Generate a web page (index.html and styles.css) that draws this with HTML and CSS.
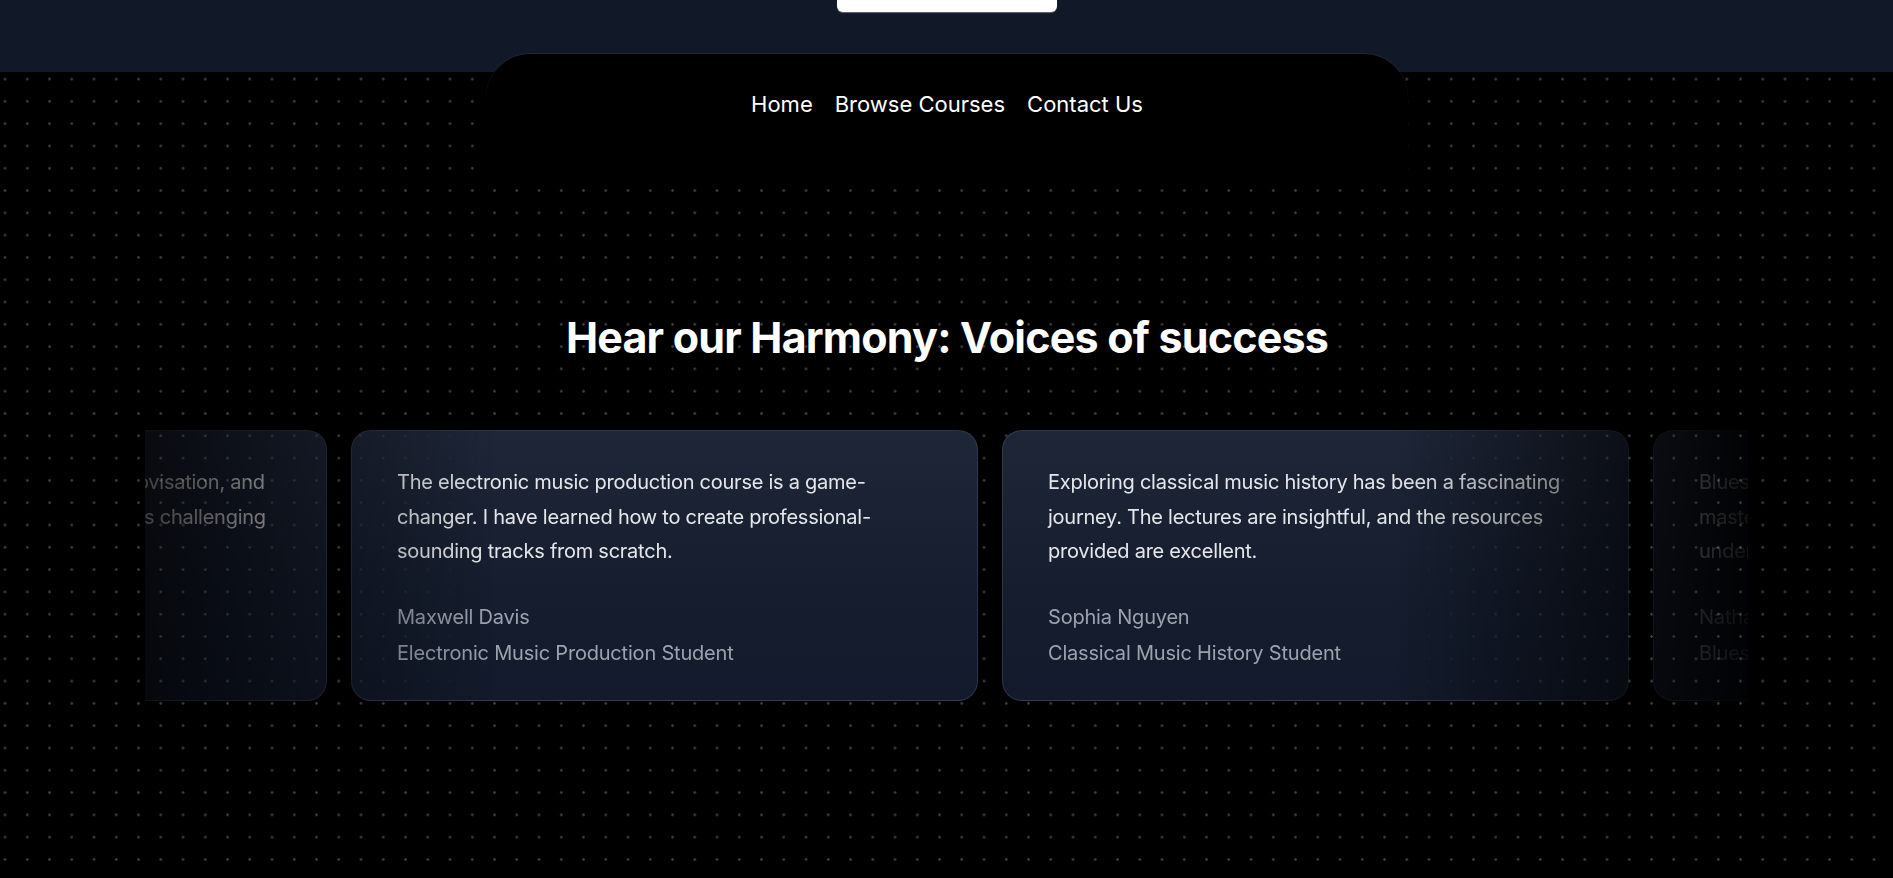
FILE: index.html
```html
<!DOCTYPE html>
<html lang="en">
<head>
<meta charset="utf-8">
<title>Voices of success</title>
<link rel="stylesheet" href="styles.css">
</head>
<body>
<header class="topbar">
  <div class="top-button"></div>
</header>
<main class="stage">
  <nav class="nav-tab">
    <a class="nav-link" href="#">Home</a>
    <a class="nav-link" href="#">Browse Courses</a>
    <a class="nav-link" href="#">Contact Us</a>
  </nav>
  <section class="testimonials">
    <h2 class="section-title">Hear our Harmony: Voices of success</h2>
    <div class="carousel">
      <div class="track">
        <article class="card">
          <p class="quote">The jazz course improved my ear, my improvisation, and my confidence on stage. Each new lesson is challenging enough to keep me motivated.</p>
          <p class="person">Liam Carter</p>
          <p class="role">Jazz Student</p>
        </article>
        <article class="card">
          <p class="quote">The electronic music production course is a game-changer. I have learned how to create professional-sounding tracks from scratch.</p>
          <p class="person">Maxwell Davis</p>
          <p class="role">Electronic Music Production Student</p>
        </article>
        <article class="card">
          <p class="quote">Exploring classical music history has been a fascinating journey. The lectures are insightful, and the resources provided are excellent.</p>
          <p class="person">Sophia Nguyen</p>
          <p class="role">Classical Music History Student</p>
        </article>
        <article class="card">
          <p class="quote">Blues guitar classes have been amazing. I was able to master bends, slides and vibrato. I now have a deep understanding of the genre.</p>
          <p class="person">Nathan Brooks</p>
          <p class="role">Blues Guitar Student</p>
        </article>
      </div>
    </div>
  </section>
</main>
</body>
</html>
```
FILE: styles.css
```css
* { box-sizing: border-box; }
html, body { margin: 0; padding: 0; }
body {
  background: #000;
  font-family: Inter, "Noto Sans", sans-serif;
  color: #fff;
  height: 878px;
  overflow: hidden;
}
.topbar {
  height: 72px;
  background: #111827;
  display: flex;
  justify-content: center;
}
.top-button {
  width: 220px;
  height: 12px;
  margin-left: 1px;
  background: #fff;
  border-radius: 0 0 6px 6px;
  box-shadow: 0 1px 1px rgba(160,160,170,0.6);
}
.stage {
  height: 806px;
  background-color: #000;
  background-image: radial-gradient(circle at center, #3b3b40 0, #3b3b40 1px, transparent 1.6px);
  background-size: 22.25px 22.3px;
  background-position: -6.1px -4.1px;
  display: flex;
  flex-direction: column;
  align-items: center;
}
.nav-tab {
  width: 922px;
  height: 120px;
  margin-top: -18px;
  margin-left: 1px;
  background: #000;
  border-radius: 44px 44px 0 0;
  box-shadow: 0 -1px 0 rgba(55,65,81,0.35);
  display: flex;
  justify-content: center;
  align-items: flex-start;
  gap: 22px;
  padding-top: 35px;
}
.nav-link {
  color: #fff;
  text-decoration: none;
  font-size: 22px;
  line-height: 30px;
}
.testimonials {
  width: 100%;
  display: flex;
  flex-direction: column;
  align-items: center;
}
.section-title {
  margin: 136px 0 0 1px;
  font-size: 43px;
  line-height: 54px;
  font-weight: 700;
  letter-spacing: -0.8px;
}
.carousel {
  width: 1603px;
  margin-top: 66px;
  overflow: hidden;
  -webkit-mask-image: linear-gradient(to right, rgba(0,0,0,0.28) 0%, #000 22%, #000 78%, rgba(0,0,0,0.08) 100%);
  mask-image: linear-gradient(to right, rgba(0,0,0,0.28) 0%, #000 22%, #000 78%, rgba(0,0,0,0.08) 100%);
}
.track {
  display: flex;
  gap: 24px;
  transform: translateX(-445px);
}
.card {
  flex: 0 0 627px;
  height: 271px;
  padding: 34px 45px 0;
  border-radius: 20px;
  border: 1px solid rgba(75,85,110,0.45);
  background: linear-gradient(to bottom, #1e2638 0%, #151d2e 60%, #121a2b 100%);
}
.quote {
  margin: 0;
  font-size: 20px;
  line-height: 34.5px;
  letter-spacing: -0.25px;
  color: #e5e7eb;
}
.person {
  margin: 30px 0 0;
  font-size: 20px;
  line-height: 36px;
  letter-spacing: -0.2px;
  color: #9ca3af;
}
.role {
  margin: 0;
  font-size: 20px;
  line-height: 36px;
  letter-spacing: -0.2px;
  color: #9ca3af;
}
```
